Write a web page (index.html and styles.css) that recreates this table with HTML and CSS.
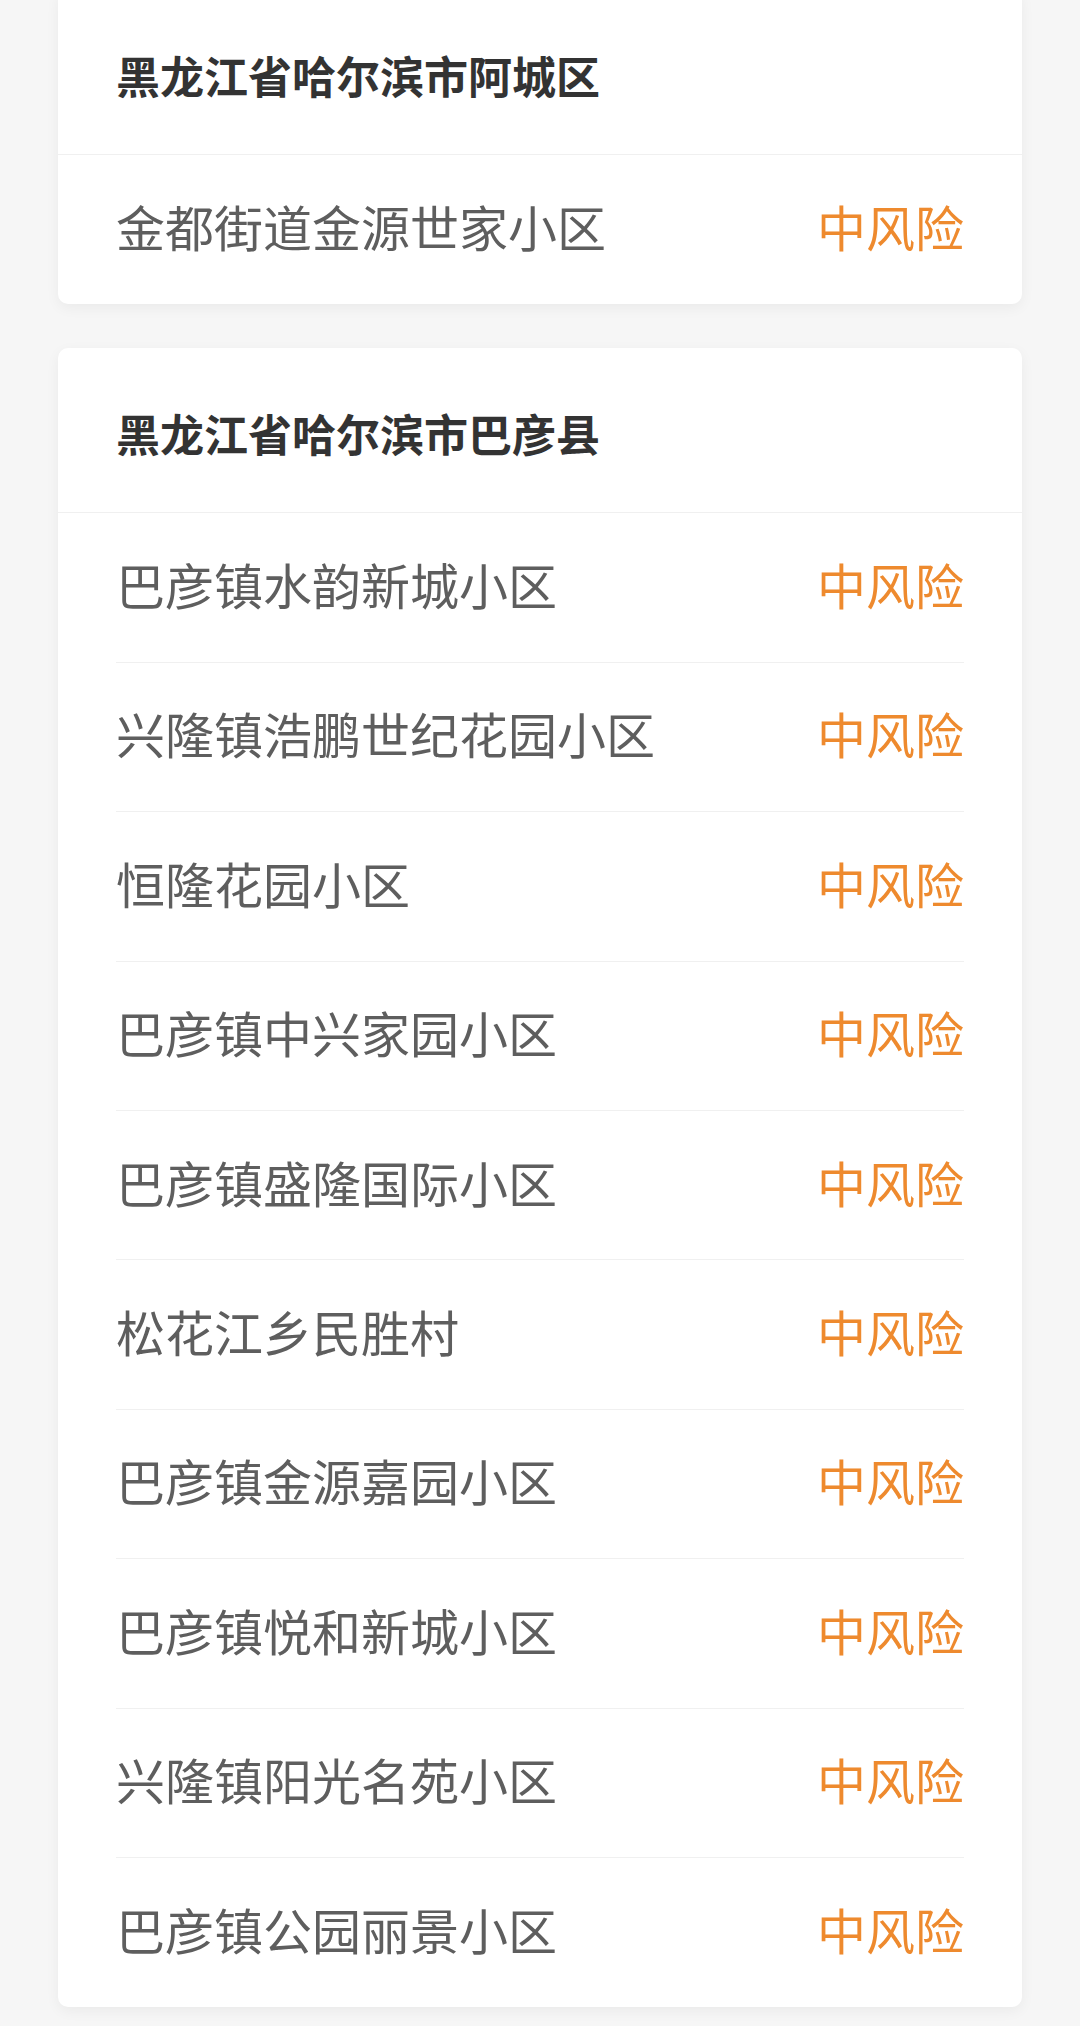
FILE: index.html
```html
<!DOCTYPE html>
<html lang="zh-CN">
<head>
    <meta charset="UTF-8">
    <meta name="viewport" content="width=device-width, initial-scale=1.0">
    <title>中风险地区</title>
    <link rel="stylesheet" href="styles.css">
</head>
<body>
    <div class="list">
        <!-- 阿城区 -->
        <div class="card">
            <div class="card-head">黑龙江省哈尔滨市阿城区</div>
            <div class="row">
                <span class="place">金都街道金源世家小区</span>
                <span class="risk">中风险</span>
            </div>
        </div>

        <!-- 巴彦县 -->
        <div class="card">
            <div class="card-head">黑龙江省哈尔滨市巴彦县</div>
            <div class="row">
                <span class="place">巴彦镇水韵新城小区</span>
                <span class="risk">中风险</span>
            </div>
            <div class="row">
                <span class="place">兴隆镇浩鹏世纪花园小区</span>
                <span class="risk">中风险</span>
            </div>
            <div class="row">
                <span class="place">恒隆花园小区</span>
                <span class="risk">中风险</span>
            </div>
            <div class="row">
                <span class="place">巴彦镇中兴家园小区</span>
                <span class="risk">中风险</span>
            </div>
            <div class="row">
                <span class="place">巴彦镇盛隆国际小区</span>
                <span class="risk">中风险</span>
            </div>
            <div class="row">
                <span class="place">松花江乡民胜村</span>
                <span class="risk">中风险</span>
            </div>
            <div class="row">
                <span class="place">巴彦镇金源嘉园小区</span>
                <span class="risk">中风险</span>
            </div>
            <div class="row">
                <span class="place">巴彦镇悦和新城小区</span>
                <span class="risk">中风险</span>
            </div>
            <div class="row">
                <span class="place">兴隆镇阳光名苑小区</span>
                <span class="risk">中风险</span>
            </div>
            <div class="row">
                <span class="place">巴彦镇公园丽景小区</span>
                <span class="risk">中风险</span>
            </div>
        </div>
    </div>
</body>
</html>
```

FILE: styles.css
```css
html, body {
    margin: 0;
    background-color: #f6f6f6;
    font-family: "Noto Sans CJK SC", "Noto Sans", sans-serif;
    overflow: hidden;
}
.list {
    margin-top: -10px;
    padding: 0 58px;
}
.card {
    background-color: #fff;
    border-radius: 10px;
    box-shadow: 0 4px 14px rgba(0, 0, 0, 0.05);
    margin-bottom: 44px;
}
.card-head {
    height: 165px;
    box-sizing: border-box;
    padding: 5px 58px 0;
    display: flex;
    align-items: center;
    border-bottom: 1px solid #f0f0f0;
    font-size: 44px;
    font-weight: 700;
    color: #333;
}
.row {
    height: 149.4px;
    box-sizing: border-box;
    margin: 0 58px;
    padding-bottom: 8px;
    display: flex;
    justify-content: space-between;
    align-items: center;
    border-bottom: 1px solid #f0f0f0;
    font-size: 49px;
}
.row:last-child {
    border-bottom: none;
}
.place {
    color: #5e5e5e;
}
.risk {
    color: #ee8a2e;
}
```
